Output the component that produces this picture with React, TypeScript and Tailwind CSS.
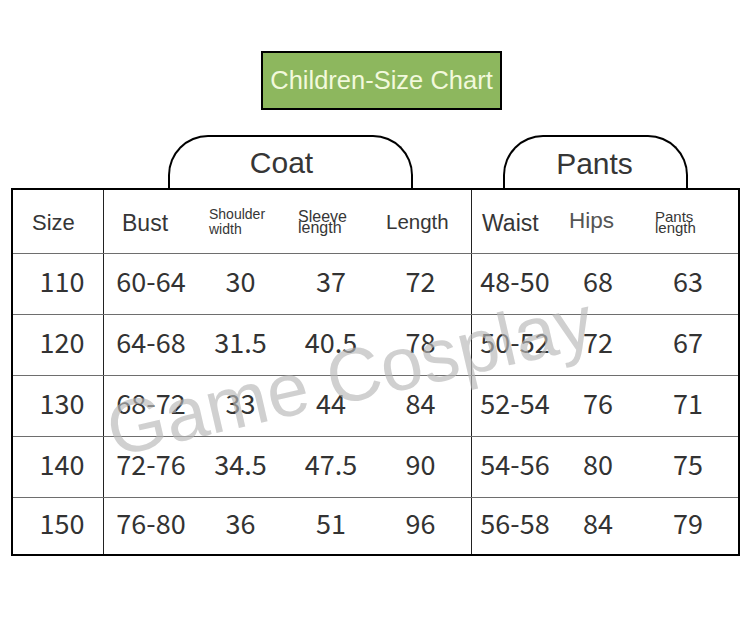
import React from 'react';

const rows = [
  ['110', '60-64', '30', '37', '72', '48-50', '68', '63'],
  ['120', '64-68', '31.5', '40.5', '78', '50-52', '72', '67'],
  ['130', '68-72', '33', '44', '84', '52-54', '76', '71'],
  ['140', '72-76', '34.5', '47.5', '90', '54-56', '80', '75'],
  ['150', '76-80', '36', '51', '96', '56-58', '84', '79'],
];

const cols = 'grid grid-cols-[91px_94px_88px_90px_96px_86px_80px_100px]';

const App = () => {
  return (
    <div className="relative w-[750px] h-[636px] overflow-hidden bg-white font-['Liberation_Sans',Arial,sans-serif] text-[#363636]">
      {/* Title */}
      <div className="pt-[51px] pl-[261px]">
        <div className="w-[241px] h-[59px] border-2 border-black bg-[#8db75e] flex items-center justify-center text-[25.5px] text-[#f2f9dc] leading-none">
          Children-Size Chart
        </div>
      </div>

      {/* Tabs */}
      <div className="mt-[25px] ml-[11px] flex">
        <div className="ml-[157px] w-[245px] h-[53px] border-2 border-b-0 border-black rounded-t-[40px] flex justify-center pt-[11px] pr-[18px] text-[30px] leading-none">
          Coat
        </div>
        <div className="ml-[90px] w-[185px] h-[53px] border-2 border-b-0 border-black rounded-t-[40px] flex justify-center pt-[12px] pr-[2px] text-[30px] leading-none">
          Pants
        </div>
      </div>

      {/* Table */}
      <div className="ml-[11px] w-[729px] border-2 border-black">
        <div className={`${cols} h-[64px] border-b border-[#6e6e6e] leading-none`}>
          <div className="border-r border-[#222] flex items-center pl-[19px] pt-[3px] text-[22px]">Size</div>
          <div className="flex items-center pl-[18px] pt-[3px] text-[23px]">Bust</div>
          <div className="flex flex-col justify-center pl-[11px] pt-[1px] text-[14px] leading-[15px]">
            <span>Shoulder</span>
            <span>width</span>
          </div>
          <div className="flex flex-col justify-center pl-[12px] text-[16px] leading-[11px]">
            <span>Sleeve</span>
            <span>length</span>
          </div>
          <div className="border-r border-[#222] flex items-center pl-[10px] pt-[1px] text-[20.5px]">Length</div>
          <div className="flex items-center pl-[10px] pt-[3px] text-[23px]">Waist</div>
          <div className="flex items-center pl-[11px] text-[22.5px] text-[#555]">Hips</div>
          <div className="flex flex-col justify-center pl-[17px] text-[15px] leading-[11px]">
            <span>Pants</span>
            <span>length</span>
          </div>
        </div>

        {rows.map((row, i) => (
          <div
            key={row[0]}
            className={`${cols} ${i < rows.length - 1 ? 'h-[61px] border-b border-[#6e6e6e]' : 'h-[56px]'} font-['Noto_Sans_CJK_SC',sans-serif] text-[27px] leading-none text-[#333]`}
          >
            {row.map((v, j) => (
              <div
                key={j}
                className={`flex items-center justify-center pb-[7px] ${j === 0 ? 'border-r border-[#222] pl-[8px]' : ''} ${j === 4 ? 'border-r border-[#222] pr-[6px]' : ''} ${j === 2 ? 'pr-[3px]' : ''}`}
              >
                {v}
              </div>
            ))}
          </div>
        ))}
      </div>

      {/* Watermark */}
      <div className="pointer-events-none absolute left-[350px] top-[376px] -translate-x-1/2 -translate-y-1/2 -rotate-[13deg] whitespace-nowrap text-[75px] leading-none text-[#b8b8b8] opacity-65">
        Game Cosplay
      </div>
    </div>
  );
};

export default App;
